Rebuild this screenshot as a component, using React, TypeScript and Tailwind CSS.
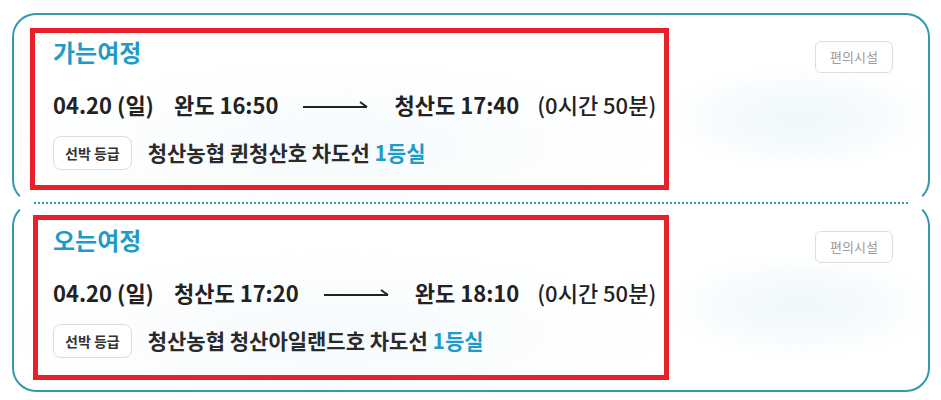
import React from "react";

const TEAL = "text-[#1f9bc8]";

function Arrow() {
  return (
    <svg width="66" height="12" viewBox="0 0 66 12" className="shrink-0">
      <line x1="0" y1="9" x2="64" y2="9" stroke="#222" strokeWidth="2" />
      <line x1="57" y1="4" x2="64" y2="9" stroke="#222" strokeWidth="2" />
    </svg>
  );
}

type Leg = {
  title: string;
  from: string;
  to: string;
  ship: string;
};

function Content({ leg }: { leg: Leg }) {
  return (
    <div className="flex flex-col">
      <div className={`text-[24px] leading-[30px] font-bold ${TEAL}`}>{leg.title}</div>
      <div className="mt-[23px] flex items-center text-[22px] leading-[28px] text-[#222] whitespace-nowrap">
        <span className="font-bold">04.20 (일)</span>
        <span className="ml-[20px] font-bold">{leg.from}</span>
        <span className="mx-[25px]">
          <Arrow />
        </span>
        <span className="font-bold">{leg.to}</span>
        <span className="ml-[18px] font-medium">(0시간 50분)</span>
      </div>
      <div className="mt-[18px] flex items-center whitespace-nowrap">
        <span className="flex h-[34px] items-center rounded-[8px] border border-[#dcdcdc] bg-white px-[11px] text-[14px] font-bold text-[#333]">
          선박 등급
        </span>
        <span className="ml-[16px] text-[21px] font-bold text-[#2a2a2a]">
          {leg.ship} <span className={TEAL}>1등실</span>
        </span>
      </div>
    </div>
  );
}

export default function App() {
  const go: Leg = {
    title: "가는여정",
    from: "완도 16:50",
    to: "청산도 17:40",
    ship: "청산농협 퀸청산호 차도선",
  };
  const back: Leg = {
    title: "오는여정",
    from: "청산도 17:20",
    to: "완도 18:10",
    ship: "청산농협 청산아일랜드호 차도선",
  };
  const bg =
    "bg-[radial-gradient(ellipse_130px_50px_at_86%_55%,#f0f8fc_0%,#f6fbfd_60%,transparent_100%),radial-gradient(ellipse_320px_80px_at_35%_70%,#f5fafc_0%,transparent_100%)] bg-white";
  return (
    <div
      className="h-[400px] w-[941px] bg-white pt-[13px] pl-[12px] pr-[11px]"
      style={{ fontFamily: '"Noto Sans CJK KR", "Noto Sans", sans-serif' }}
    >
      <div className="flex flex-col">
        <div
          className={`flex h-[191px] items-start justify-between rounded-[24px] border-2 border-[#3499ad] border-b-transparent pt-[13px] pl-[16px] pr-[35px] ${bg}`}
        >
          <div className="h-[162px] w-[639px] border-[5px] border-[#e8202a] pt-[4px] pl-[18px]">
            <Content leg={go} />
          </div>
          <button className="mt-[13px] h-[32px] w-[78px] rounded-[6px] border border-[#dedede] bg-white text-[13px] text-[#9a9a9a]">
            편의시설
          </button>
        </div>
        <div className="relative z-10 -mt-[2px] mx-[22px] h-0 border-t-2 border-dotted border-[#3499ad]" />
        <div
          className={`-mt-[2px] flex h-[190px] items-start justify-between rounded-[24px] border-2 border-[#3499ad] border-t-transparent pt-[11px] pl-[19px] pr-[35px] ${bg}`}
        >
          <div className="h-[165px] w-[636px] border-[5px] border-[#e8202a] pt-[5px] pl-[15px]">
            <Content leg={back} />
          </div>
          <button className="mt-[16px] h-[32px] w-[78px] rounded-[6px] border border-[#dedede] bg-white text-[13px] text-[#9a9a9a]">
            편의시설
          </button>
        </div>
      </div>
    </div>
  );
}
